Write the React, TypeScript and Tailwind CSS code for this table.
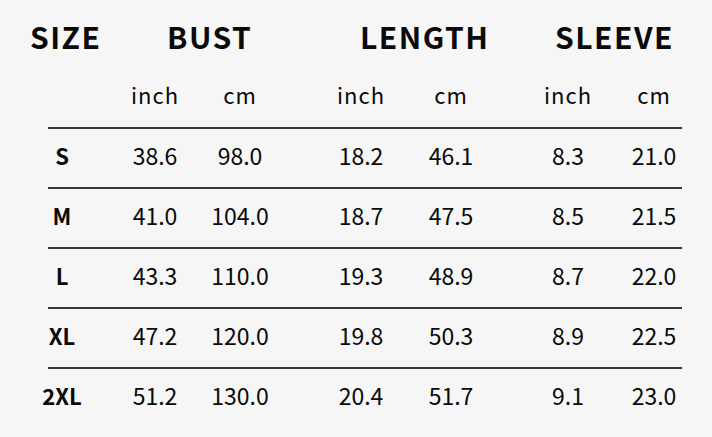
import React from "react";

const rows = [
  ["S", "38.6", "98.0", "18.2", "46.1", "8.3", "21.0"],
  ["M", "41.0", "104.0", "18.7", "47.5", "8.5", "21.5"],
  ["L", "43.3", "110.0", "19.3", "48.9", "8.7", "22.0"],
  ["XL", "47.2", "120.0", "19.8", "50.3", "8.9", "22.5"],
  ["2XL", "51.2", "130.0", "20.4", "51.7", "9.1", "23.0"],
];

// each cell is 84px wide and centred on its column; margins place the centres
const cellPos = ["ml-[20px]", "ml-[9px]", "ml-[1px]", "ml-[37px]", "ml-[6px]", "ml-[33px]", "ml-[2px]"];

const Rule = () => <div className="ml-[48px] w-[634px] h-[2px] bg-[#383838]" />;

export default function App() {
  return (
    <div
      className="w-[712px] h-[437px] bg-[#f5f6f5] text-[#0a0a0a] overflow-hidden"
      style={{ fontFamily: '"Noto Sans CJK SC", "Noto Sans", sans-serif' }}
    >
      {/* Title row */}
      <div className="flex h-[74px] items-center pb-[2px] text-[30px] font-bold tracking-[1.5px] leading-none">
        <span className="ml-[30px] w-[137px]">SIZE</span>
        <span className="w-[193px]">BUST</span>
        <span className="w-[195px]">LENGTH</span>
        <span>SLEEVE</span>
      </div>

      {/* Units */}
      <div className="flex h-[44px] items-center pb-[4px] text-[22px] tracking-[1px] leading-none">
        {["", "inch", "cm", "inch", "cm", "inch", "cm"].map((u, i) => (
          <span key={i} className={`${cellPos[i]} w-[84px] text-center`}>
            {u}
          </span>
        ))}
      </div>
      <div className="h-[9px]" />
      <Rule />

      {rows.map((r, ri) => (
        <div key={r[0]}>
          <div className="flex h-[58px] items-center pb-[6px] text-[23px] leading-none">
            {r.map((v, i) => (
              <span
                key={i}
                className={`${cellPos[i]} w-[84px] text-center ${i === 0 ? "font-bold text-[22px]" : ""}`}
              >
                {v}
              </span>
            ))}
          </div>
          {ri < rows.length - 1 && <Rule />}
        </div>
      ))}
    </div>
  );
}
